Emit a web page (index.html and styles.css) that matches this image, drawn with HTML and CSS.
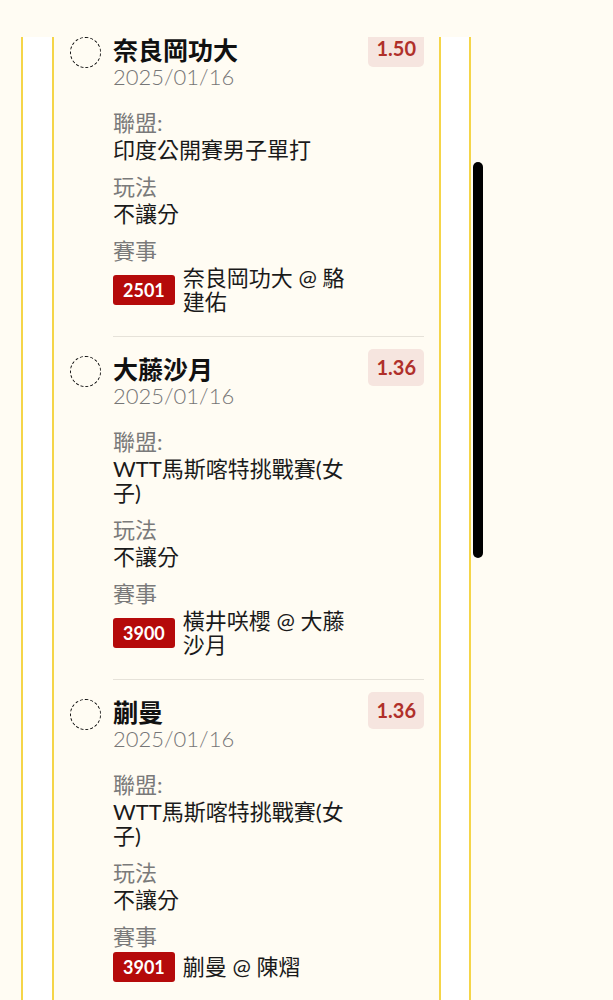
FILE: index.html
```html
<!DOCTYPE html>
<html lang="zh-Hant">

<head>
  <meta charset="UTF-8">
  <meta name="viewport" content="width=device-width, initial-scale=1.0">
  <title>注單</title>
  <link rel="stylesheet" href="styles.css">
</head>

<body>
  <div class="frame">
    <div class="ticket">
      <div class="ticket-list">

        <div class="item">
          <span class="check"></span>
          <div class="item-main">
            <div class="info">
              <h2 class="player">奈良岡功大</h2>
              <p class="date">2025/01/16</p>
              <div class="field">
                <p class="label">聯盟:</p>
                <p class="value">印度公開賽男子單打</p>
              </div>
              <div class="field">
                <p class="label">玩法</p>
                <p class="value">不讓分</p>
              </div>
              <div class="field">
                <p class="label">賽事</p>
                <div class="event">
                  <span class="event-code">2501</span>
                  <span class="event-name">奈良岡功大 @ 駱建佑</span>
                </div>
              </div>
            </div>
            <span class="odds">1.50</span>
          </div>
        </div>

        <div class="item">
          <span class="check"></span>
          <div class="item-main">
            <div class="info">
              <h2 class="player">大藤沙月</h2>
              <p class="date">2025/01/16</p>
              <div class="field">
                <p class="label">聯盟:</p>
                <p class="value">WTT馬斯喀特挑戰賽(女子)</p>
              </div>
              <div class="field">
                <p class="label">玩法</p>
                <p class="value">不讓分</p>
              </div>
              <div class="field">
                <p class="label">賽事</p>
                <div class="event">
                  <span class="event-code">3900</span>
                  <span class="event-name">橫井咲櫻 @ 大藤沙月</span>
                </div>
              </div>
            </div>
            <span class="odds">1.36</span>
          </div>
        </div>

        <div class="item">
          <span class="check"></span>
          <div class="item-main">
            <div class="info">
              <h2 class="player">蒯曼</h2>
              <p class="date">2025/01/16</p>
              <div class="field">
                <p class="label">聯盟:</p>
                <p class="value">WTT馬斯喀特挑戰賽(女子)</p>
              </div>
              <div class="field">
                <p class="label">玩法</p>
                <p class="value">不讓分</p>
              </div>
              <div class="field">
                <p class="label">賽事</p>
                <div class="event">
                  <span class="event-code">3901</span>
                  <span class="event-name">蒯曼 @ 陳熠</span>
                </div>
              </div>
            </div>
            <span class="odds">1.36</span>
          </div>
        </div>

      </div>
    </div>
  </div>
  <div class="scroll-thumb"></div>
</body>

</html>
```

FILE: styles.css
```css
body {
  font-family: 'Lato', 'Noto Sans CJK TC', sans-serif;
  font-size: 22px;
  margin: 0;
  padding: 0;
  background-color: #FFFCF3;
  color: #1A1A1A;
  position: relative;
  height: 1000px;
  overflow: hidden;
}

p,
h2 {
  margin: 0;
}

.frame {
  margin: 37px 0 0 21px;
  width: 389px;
  height: 963px;
  padding: 0 28px 0 29px;
  border-left: 2px solid #F5D548;
  border-right: 2px solid #F5D548;
  background-color: #FFFFFF;
}

.ticket {
  height: 100%;
  overflow: hidden;
  border-left: 2px solid #F5D548;
  border-right: 2px solid #F5D548;
  background-color: #FFFCF3;
}

.ticket-list {
  margin-top: -19px; /* list is scrolled a little */
}

.item {
  display: flex;
  gap: 12px;
  padding-left: 16px;
  margin-right: 15px;
}

.check {
  flex-shrink: 0;
  width: 29px;
  height: 29px;
  margin-top: 19px;
  border: 1px dashed #111111;
  border-radius: 50%;
}

.item-main {
  flex: 1;
  display: flex;
  align-items: flex-start;
  padding: 12px 0 22px;
  border-bottom: 1px solid #E6E2D9;
}

.info {
  flex: 1;
  padding-top: 5px;
  margin-right: 22px;
}

.player {
  font-size: 25px;
  font-weight: bold;
  line-height: 30px;
  color: #111111;
}

.date {
  line-height: 24px;
  font-weight: 300;
  color: #767676;
}

.field {
  margin-top: 13px;
}

.date + .field {
  margin-top: 22px;
}

.label {
  line-height: 24px;
  margin-bottom: 3px;
  color: #7A7A7A;
}

.value {
  line-height: 24px;
}

.event {
  display: flex;
  align-items: center;
  gap: 8px;
}

.event-code {
  flex-shrink: 0;
  padding: 4px 10px;
  font-size: 18px;
  font-weight: bold;
  line-height: 22px;
  color: #FFFFFF;
  background-color: #B50A0A;
  border-radius: 3px;
}

.event-name {
  line-height: 24px;
}

.odds {
  flex-shrink: 0;
  padding: 6px 8px;
  font-size: 20px;
  font-weight: bold;
  line-height: 25px;
  color: #B0302A;
  background-color: #F6E5DF;
  border-radius: 5px;
}

.scroll-thumb {
  position: absolute;
  top: 162px;
  left: 473px;
  width: 10px;
  height: 396px;
  border-radius: 5px;
  background-color: #000000;
}
```
